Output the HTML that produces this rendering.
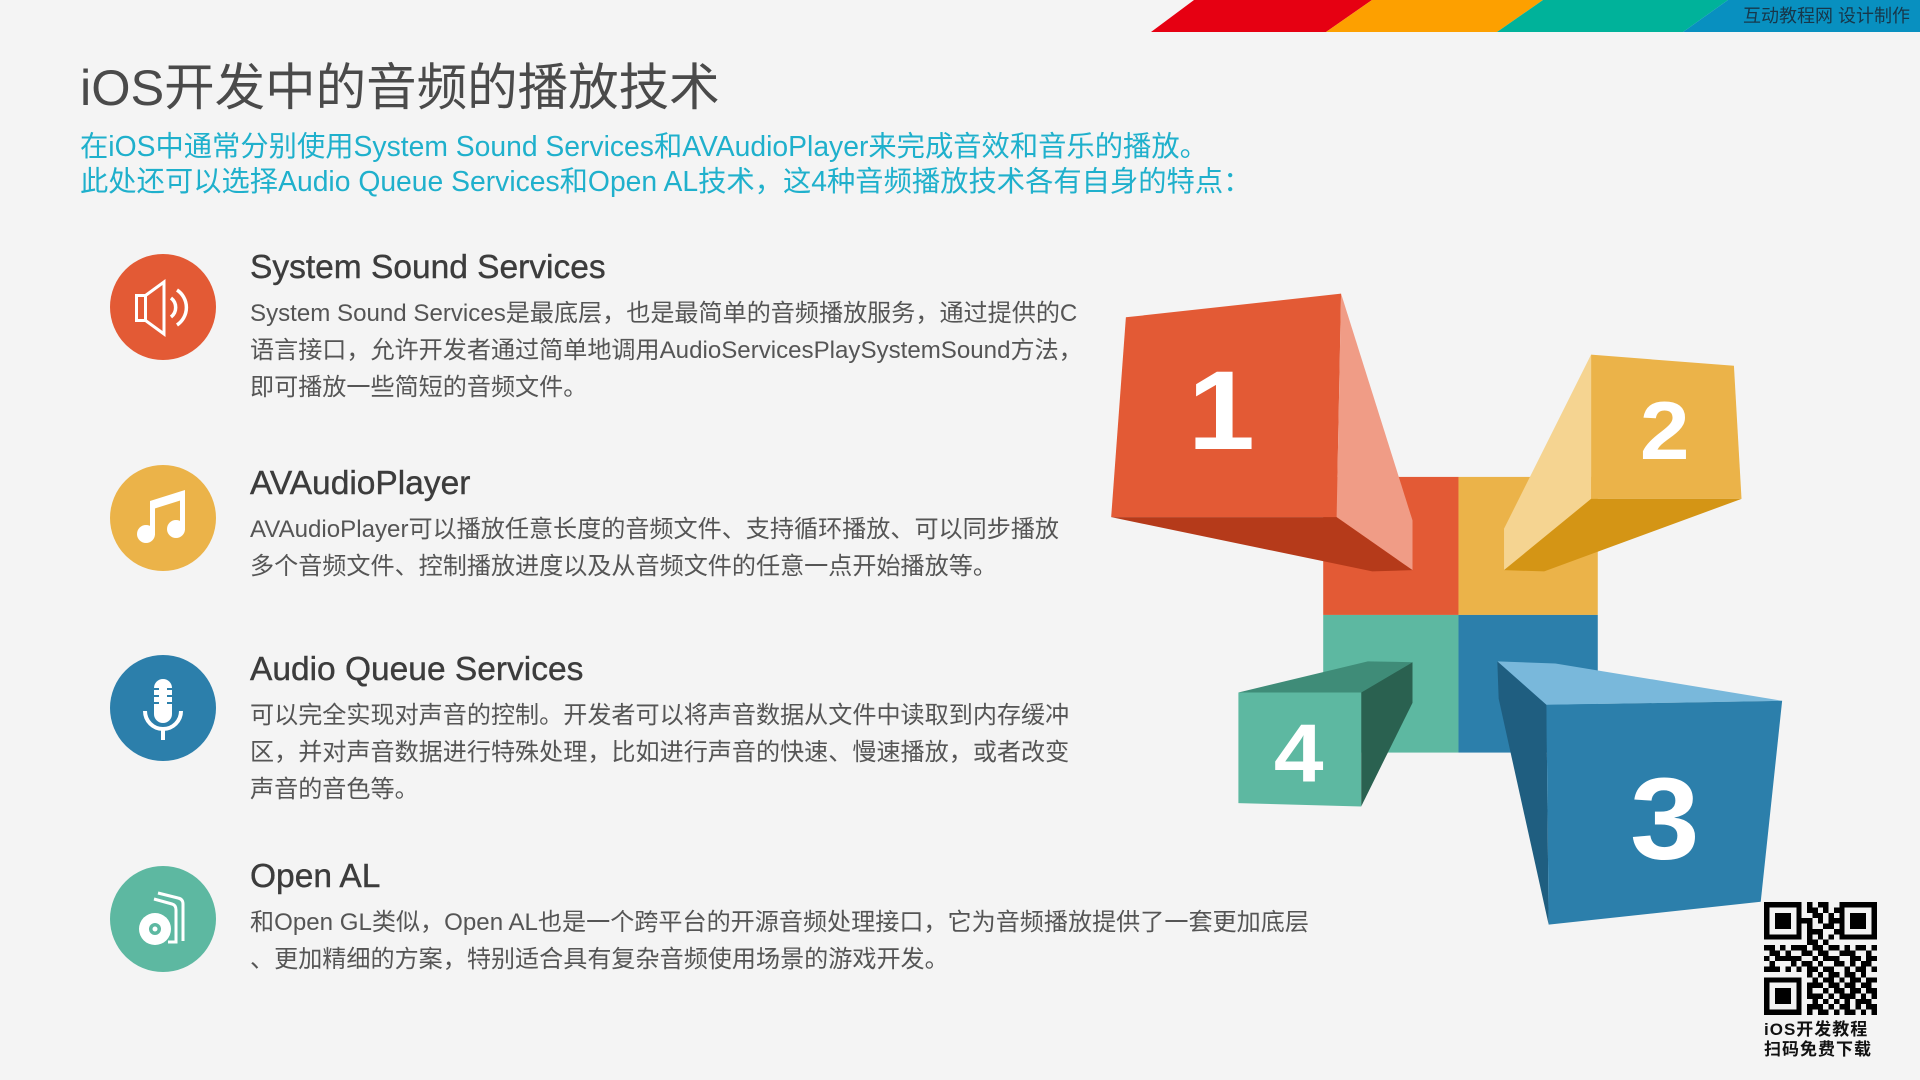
<!DOCTYPE html>
<html><head><meta charset="utf-8">
<style>
*{margin:0;padding:0;box-sizing:border-box}
body{width:1920px;height:1080px;background:#f4f4f4;position:relative;overflow:hidden;font-family:"Liberation Sans","Noto Sans CJK SC",sans-serif}
.a{position:absolute;white-space:nowrap}
.title{left:80px;top:58px;font-size:50.5px;line-height:60px;color:#4a4a4a}
.sub{left:80px;top:129px;font-size:28.3px;line-height:35px;color:#1fb0cc}
.h{left:250px;font-size:33.5px;line-height:40px;color:#3c3c3c;-webkit-text-stroke:0.4px #3c3c3c}
.b{left:250px;font-size:24.1px;line-height:37px;color:#555}
.ic{position:absolute;left:110px;width:106px;height:106px}
</style></head><body>
<svg class="a" style="left:0;top:0" width="1920" height="34">
<polygon points="1194,0 1372,0 1326,32 1151,32" fill="#e60012"/>
<polygon points="1372,0 1543,0 1497,32 1326,32" fill="#fda000"/>
<polygon points="1543,0 1728,0 1683,32 1497,32" fill="#00b29a"/>
<polygon points="1728,0 1920,0 1920,32 1683,32" fill="#0890c0"/>
</svg>
<div class="a" style="right:10px;top:4px;font-size:18px;line-height:24px;color:#17374a">互动教程网 设计制作</div>

<div class="a title">iOS开发中的音频的播放技术</div>
<div class="a sub">在iOS中通常分别使用System Sound Services和AVAudioPlayer来完成音效和音乐的播放。<br>此处还可以选择Audio Queue Services和Open AL技术，这4种音频播放技术各有自身的特点：</div>

<svg class="ic" style="top:254px" viewBox="0 0 106 106"><circle cx="53" cy="53" r="53" fill="#e35a35"/>
<rect x="26.5" y="41.5" width="9" height="25" fill="none" stroke="#fff" stroke-width="3"/>
<polygon points="35.5,41.5 54,28 54,80 35.5,66.5" fill="none" stroke="#fff" stroke-width="3"/>
<path d="M61 44 A12 12 0 0 1 61 63" fill="none" stroke="#fff" stroke-width="3.5"/>
<path d="M67 36 A21 21 0 0 1 67 71" fill="none" stroke="#fff" stroke-width="3.5"/></svg>
<div class="a h" style="top:248px">System Sound Services</div>
<div class="a b" style="top:295px">System Sound Services是最底层，也是最简单的音频播放服务，通过提供的C<br>语言接口，允许开发者通过简单地调用AudioServicesPlaySystemSound方法，<br>即可播放一些简短的音频文件。</div>

<svg class="ic" style="top:465px" viewBox="0 0 106 106"><circle cx="53" cy="53" r="53" fill="#ebb349"/>
<circle cx="36" cy="69" r="9" fill="#fff"/><circle cx="66" cy="64" r="9" fill="#fff"/>
<rect x="40" y="38" width="5" height="32" fill="#fff"/><rect x="70" y="28" width="5" height="37" fill="#fff"/>
<polygon points="40,36 75,25 75,34 40,45" fill="#fff"/></svg>
<div class="a h" style="top:464px">AVAudioPlayer</div>
<div class="a b" style="top:511px">AVAudioPlayer可以播放任意长度的音频文件、支持循环播放、可以同步播放<br>多个音频文件、控制播放进度以及从音频文件的任意一点开始播放等。</div>

<svg class="ic" style="top:655px" viewBox="0 0 106 106"><circle cx="53" cy="53" r="53" fill="#2c7fab"/>
<rect x="44" y="24" width="18" height="44" rx="9" fill="#fff"/>
<path d="M44 34h5M44 41h5M44 48h5M57 34h5M57 41h5M57 48h5" stroke="#2c7fab" stroke-width="2"/>
<path d="M35 56 A18 18 0 0 0 71 56" fill="none" stroke="#fff" stroke-width="4"/>
<rect x="51" y="73" width="4" height="12" fill="#fff"/></svg>
<div class="a h" style="top:650px">Audio Queue Services</div>
<div class="a b" style="top:697px">可以完全实现对声音的控制。开发者可以将声音数据从文件中读取到内存缓冲<br>区，并对声音数据进行特殊处理，比如进行声音的快速、慢速播放，或者改变<br>声音的音色等。</div>

<svg class="ic" style="top:866px" viewBox="0 0 106 106"><circle cx="53" cy="53" r="53" fill="#5db8a1"/>
<path d="M48 27 L68 32 Q73 33 73 38 L73 75" fill="none" stroke="#fff" stroke-width="3"/>
<path d="M44 33 L62 38 Q66 39 66 44 L66 76 L58 76" fill="none" stroke="#fff" stroke-width="3"/>
<circle cx="45" cy="63" r="16" fill="#fff"/><circle cx="45" cy="63" r="6" fill="#5db8a1"/><circle cx="45" cy="63" r="2.5" fill="#fff"/></svg>
<div class="a h" style="top:857px">Open AL</div>
<div class="a b" style="top:904px">和Open GL类似，Open AL也是一个跨平台的开源音频处理接口，它为音频播放提供了一套更加底层<br>、更加精细的方案，特别适合具有复杂音频使用场景的游戏开发。</div>

<svg class="a" style="left:1100px;top:280px" width="700" height="650" viewBox="0 0 1568 1568" preserveAspectRatio="none">
<rect x="500" y="475" width="303" height="333" fill="#e35a35"/>
<rect x="803" y="475" width="312" height="333" fill="#ebb349"/>
<rect x="500" y="808" width="303" height="332" fill="#5db8a1"/>
<rect x="803" y="808" width="312" height="332" fill="#2c7fab"/>
<polygon points="58,90 540,33 530,572 25,572" fill="#e35a35"/>
<polygon points="540,33 700,580 700,700 530,572" fill="#f09c86"/>
<polygon points="25,572 530,572 700,700 610,703" fill="#b53a1a"/>
<text x="272" y="408" font-family="Liberation Sans" font-weight="bold" font-size="270" fill="#fff" text-anchor="middle">1</text>
<polygon points="1100,180 1420,207 1437,528 1100,528" fill="#ebb349"/>
<polygon points="1100,180 1100,528 905,700 905,600" fill="#f5d491"/>
<polygon points="1100,528 1437,528 995,703 905,700" fill="#d49515"/>
<text x="1265" y="432" font-family="Liberation Sans" font-weight="bold" font-size="200" fill="#fff" text-anchor="middle">2</text>
<polygon points="310,995 600,920 700,922 585,995" fill="#3f8c78"/>
<polygon points="585,995 700,922 700,1020 585,1270" fill="#2a6150"/>
<polygon points="310,995 585,995 585,1270 310,1262" fill="#5db8a1"/>
<text x="445" y="1210" font-family="Liberation Sans" font-weight="bold" font-size="200" fill="#fff" text-anchor="middle">4</text>
<polygon points="890,920 1020,925 1528,1015 1000,1025" fill="#79b8db"/>
<polygon points="890,920 1000,1025 1005,1555 893,1010" fill="#1f5e80"/>
<polygon points="1000,1025 1528,1015 1480,1500 1005,1555" fill="#2c7fab"/>
<text x="1265" y="1395" font-family="Liberation Sans" font-weight="bold" font-size="280" fill="#fff" text-anchor="middle">3</text>
</svg>

<svg id="qr" class="a" style="left:1764px;top:902px" width="113" height="113" viewBox="0 0 21 21" shape-rendering="crispEdges"></svg>
<div class="a" style="left:1764px;top:1020px;font-size:17px;line-height:20px;color:#111;font-weight:bold;letter-spacing:1px">iOS开发教程<br>扫码免费下载</div>
<script>
var r=["111111101011001111111","100000101101011000001","101110100110101011101","101110111010111011101","101110101001101011101","100000101110011000001","111111101010101111111","000000001101000000000","110101110110110101101","011010011011001110010","101111100101110011011","010001011010011010110","111010101101100101101","000000001010110110100","111111100101101011011","100000101110110110110","101110101001011011011","101110101110101110101","101110100101010101110","100000101110101101011","111111101011010110101"];
var s="";for(var y=0;y<21;y++)for(var x=0;x<21;x++)if(r[y][x]=="1")s+='<rect x="'+x+'" y="'+y+'" width="1" height="1"/>';
document.getElementById("qr").innerHTML=s;
</script>
</body></html>
